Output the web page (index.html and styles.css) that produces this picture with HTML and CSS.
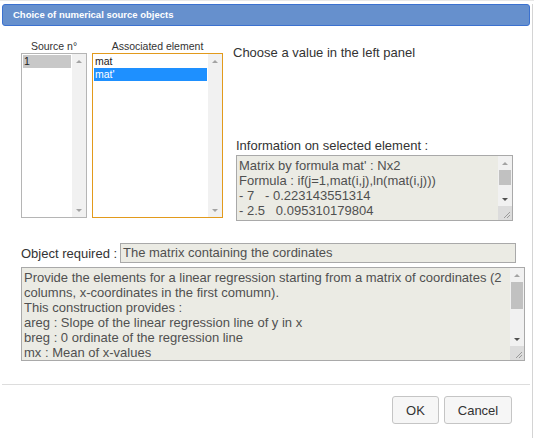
FILE: index.html
```html
<!DOCTYPE html>
<html lang="en">
<head>
    <meta charset="UTF-8">
    <title>Choice of numerical source objects</title>
    <link rel="stylesheet" href="styles.css">
</head>
<body>
    <div class="backdrop-edge"></div>
    <div class="dialog">
        <div class="titlebar">Choice of numerical source objects</div>

        <div class="content">
            <div class="top">
                <div class="col col-src">
                    <div class="col-label">Source n°</div>
                    <div class="listbox">
                        <div class="options">
                            <div class="option selected-grey">1</div>
                        </div>
                        <div class="vscroll">
                            <span class="btn"><i class="arrow up light"></i></span>
                            <span class="btn"><i class="arrow down light"></i></span>
                        </div>
                    </div>
                </div>

                <div class="col col-elem">
                    <div class="col-label">Associated element</div>
                    <div class="listbox focused">
                        <div class="options">
                            <div class="option">mat</div>
                            <div class="option selected-blue">mat'</div>
                        </div>
                        <div class="vscroll">
                            <span class="btn"><i class="arrow up light"></i></span>
                            <span class="btn"><i class="arrow down light"></i></span>
                        </div>
                    </div>
                </div>

                <div class="panel">
                    <p class="hint">Choose a value in the left panel</p>
                    <div class="info-label">Information on selected element :</div>
                    <div class="textarea info">
                        <div class="text">Matrix by formula mat' : Nx2
Formula : if(j=1,mat(i,j),ln(mat(i,j)))
- 7   - 0.223143551314
- 2.5   0.095310179804</div>
                        <div class="tscroll">
                            <span class="btn"><i class="arrow up light"></i></span>
                            <span class="thumb thumb-info"></span>
                            <span class="btn"><i class="arrow down dark"></i></span>
                            <span class="grip">
                                <svg width="14" height="14" viewBox="0 0 14 14"><path d="M12 6 L6 12 M12 9 L9 12" stroke="#9a9a9a" stroke-width="1" fill="none"/></svg>
                            </span>
                        </div>
                    </div>
                </div>
            </div>

            <div class="required">
                <span class="req-label">Object required :</span>
                <div class="req-input">The matrix containing the cordinates</div>
            </div>

            <div class="textarea desc">
                <div class="text">Provide the elements for a linear regression starting from a matrix of coordinates (2
columns, x-coordinates in the first comumn).
This construction provides :
areg : Slope of the linear regression line of y in x
breg : 0 ordinate of the regression line
mx : Mean of x-values</div>
                <div class="tscroll">
                    <span class="btn"><i class="arrow up light"></i></span>
                    <span class="thumb thumb-desc"></span>
                    <span class="btn"><i class="arrow down dark"></i></span>
                    <span class="grip">
                        <svg width="14" height="14" viewBox="0 0 14 14"><path d="M12 6 L6 12 M12 9 L9 12" stroke="#9a9a9a" stroke-width="1" fill="none"/></svg>
                    </span>
                </div>
            </div>
        </div>

        <div class="footer">
            <button class="btn-ok">OK</button>
            <button class="btn-cancel">Cancel</button>
        </div>
    </div>
</body>
</html>
```

FILE: styles.css
```css
body {
    margin: 0;
    font-family: "Liberation Sans", Arial, sans-serif;
    color: #333;
    background: #fff;
}
.backdrop-edge {
    height: 1px;
    background: #e8e8e8;
}
.dialog {
    width: 533px;
    height: 437px;
    box-sizing: border-box;
    border-right: 1px solid #d4d4d4;
}
.titlebar {
    margin: 3px 0 0 2px;
    width: 528px;
    height: 22px;
    box-sizing: border-box;
    background: #6690cd;
    border: 1px solid #3b71cf;
    border-radius: 3px;
    color: #fff;
    font-weight: bold;
    font-size: 9.5px;
    line-height: 20px;
    padding-left: 10px;
}
.content {
    padding: 14px 0 0 21px;
}
.top {
    display: flex;
    height: 181px;
}
.col-src {
    width: 66px;
}
.col-elem {
    width: 131px;
    margin-left: 5px;
}
.col-label {
    font-size: 10.5px;
    line-height: 13px;
    height: 13px;
    text-align: center;
}
.listbox {
    height: 165px;
    box-sizing: border-box;
    border: 1px solid #b5b5b5;
    display: flex;
    background: #fff;
}
.listbox.focused {
    border-color: #e29a1c;
}
.options {
    flex: 1;
    padding: 1px;
}
.option {
    font-size: 10.5px;
    line-height: 13px;
    height: 13px;
    padding-left: 1px;
    color: #222;
}
.selected-grey {
    background: #c8c8c8;
}
.selected-blue {
    background: #1e90ff;
    color: #fff;
}
.vscroll {
    width: 14px;
    background: #f1f1f1;
    display: flex;
    flex-direction: column;
    justify-content: space-between;
}
.btn {
    height: 14px;
    display: flex;
    align-items: center;
    justify-content: center;
}
.arrow {
    width: 0;
    height: 0;
    border-left: 3px solid transparent;
    border-right: 3px solid transparent;
}
.arrow.up.light {
    border-bottom: 3px solid #a3a3a3;
}
.arrow.down.light {
    border-top: 3px solid #a3a3a3;
}
.arrow.down.dark {
    border-top: 3px solid #505050;
}
.panel {
    margin-left: 10px;
    flex: 1;
}
.hint {
    margin: 5px 0 0 0;
    font-size: 13px;
    line-height: 15px;
}
.info-label {
    margin: 78px 0 0 3px;
    font-size: 13px;
    line-height: 15px;
}
.textarea {
    display: flex;
    box-sizing: border-box;
    border: 1px solid #a9a9a9;
    background: #ebebe4;
    overflow: hidden;
}
.textarea .text {
    flex: 1;
    padding: 2px 2px 0 2px;
    font-size: 13px;
    line-height: 15px;
    color: #505050;
    white-space: pre;
    overflow: hidden;
}
.info {
    margin: 2px 0 0 3px;
    width: 277px;
    height: 66px;
}
.tscroll {
    width: 14px;
    background: #f1f1f1;
    display: flex;
    flex-direction: column;
}
.thumb {
    display: block;
    margin: 0 1px;
    background: #c1c1c1;
}
.thumb-info {
    height: 15px;
    margin-bottom: auto;
}
.thumb-desc {
    height: 27px;
    margin-bottom: auto;
}
.grip {
    height: 14px;
    background: #dcdcdc;
}
.grip svg {
    display: block;
}
.required {
    display: flex;
    align-items: center;
    margin-top: 22px;
    height: 20px;
}
.req-label {
    width: 99px;
    font-size: 13px;
}
.req-input {
    width: 396px;
    height: 20px;
    box-sizing: border-box;
    border: 1px solid #a9a9a9;
    background: #ebebe4;
    font-size: 13px;
    line-height: 18px;
    padding-left: 2px;
    color: #505050;
}
.desc {
    margin-top: 4px;
    width: 504px;
    height: 94px;
}
.footer {
    margin: 23px 0 0 2px;
    width: 528px;
    border-top: 1px solid #dddddd;
    padding: 11px 18px 0 0;
    box-sizing: border-box;
    display: flex;
    justify-content: flex-end;
    gap: 5px;
}
.footer button {
    height: 28px;
    font-family: "Liberation Sans", Arial, sans-serif;
    font-size: 13px;
    color: #333;
    background: #f6f6f6;
    border: 1px solid #c5c5c5;
    border-radius: 3px;
    padding: 0;
}
.btn-ok {
    width: 47px;
}
.btn-cancel {
    width: 68px;
}
```
